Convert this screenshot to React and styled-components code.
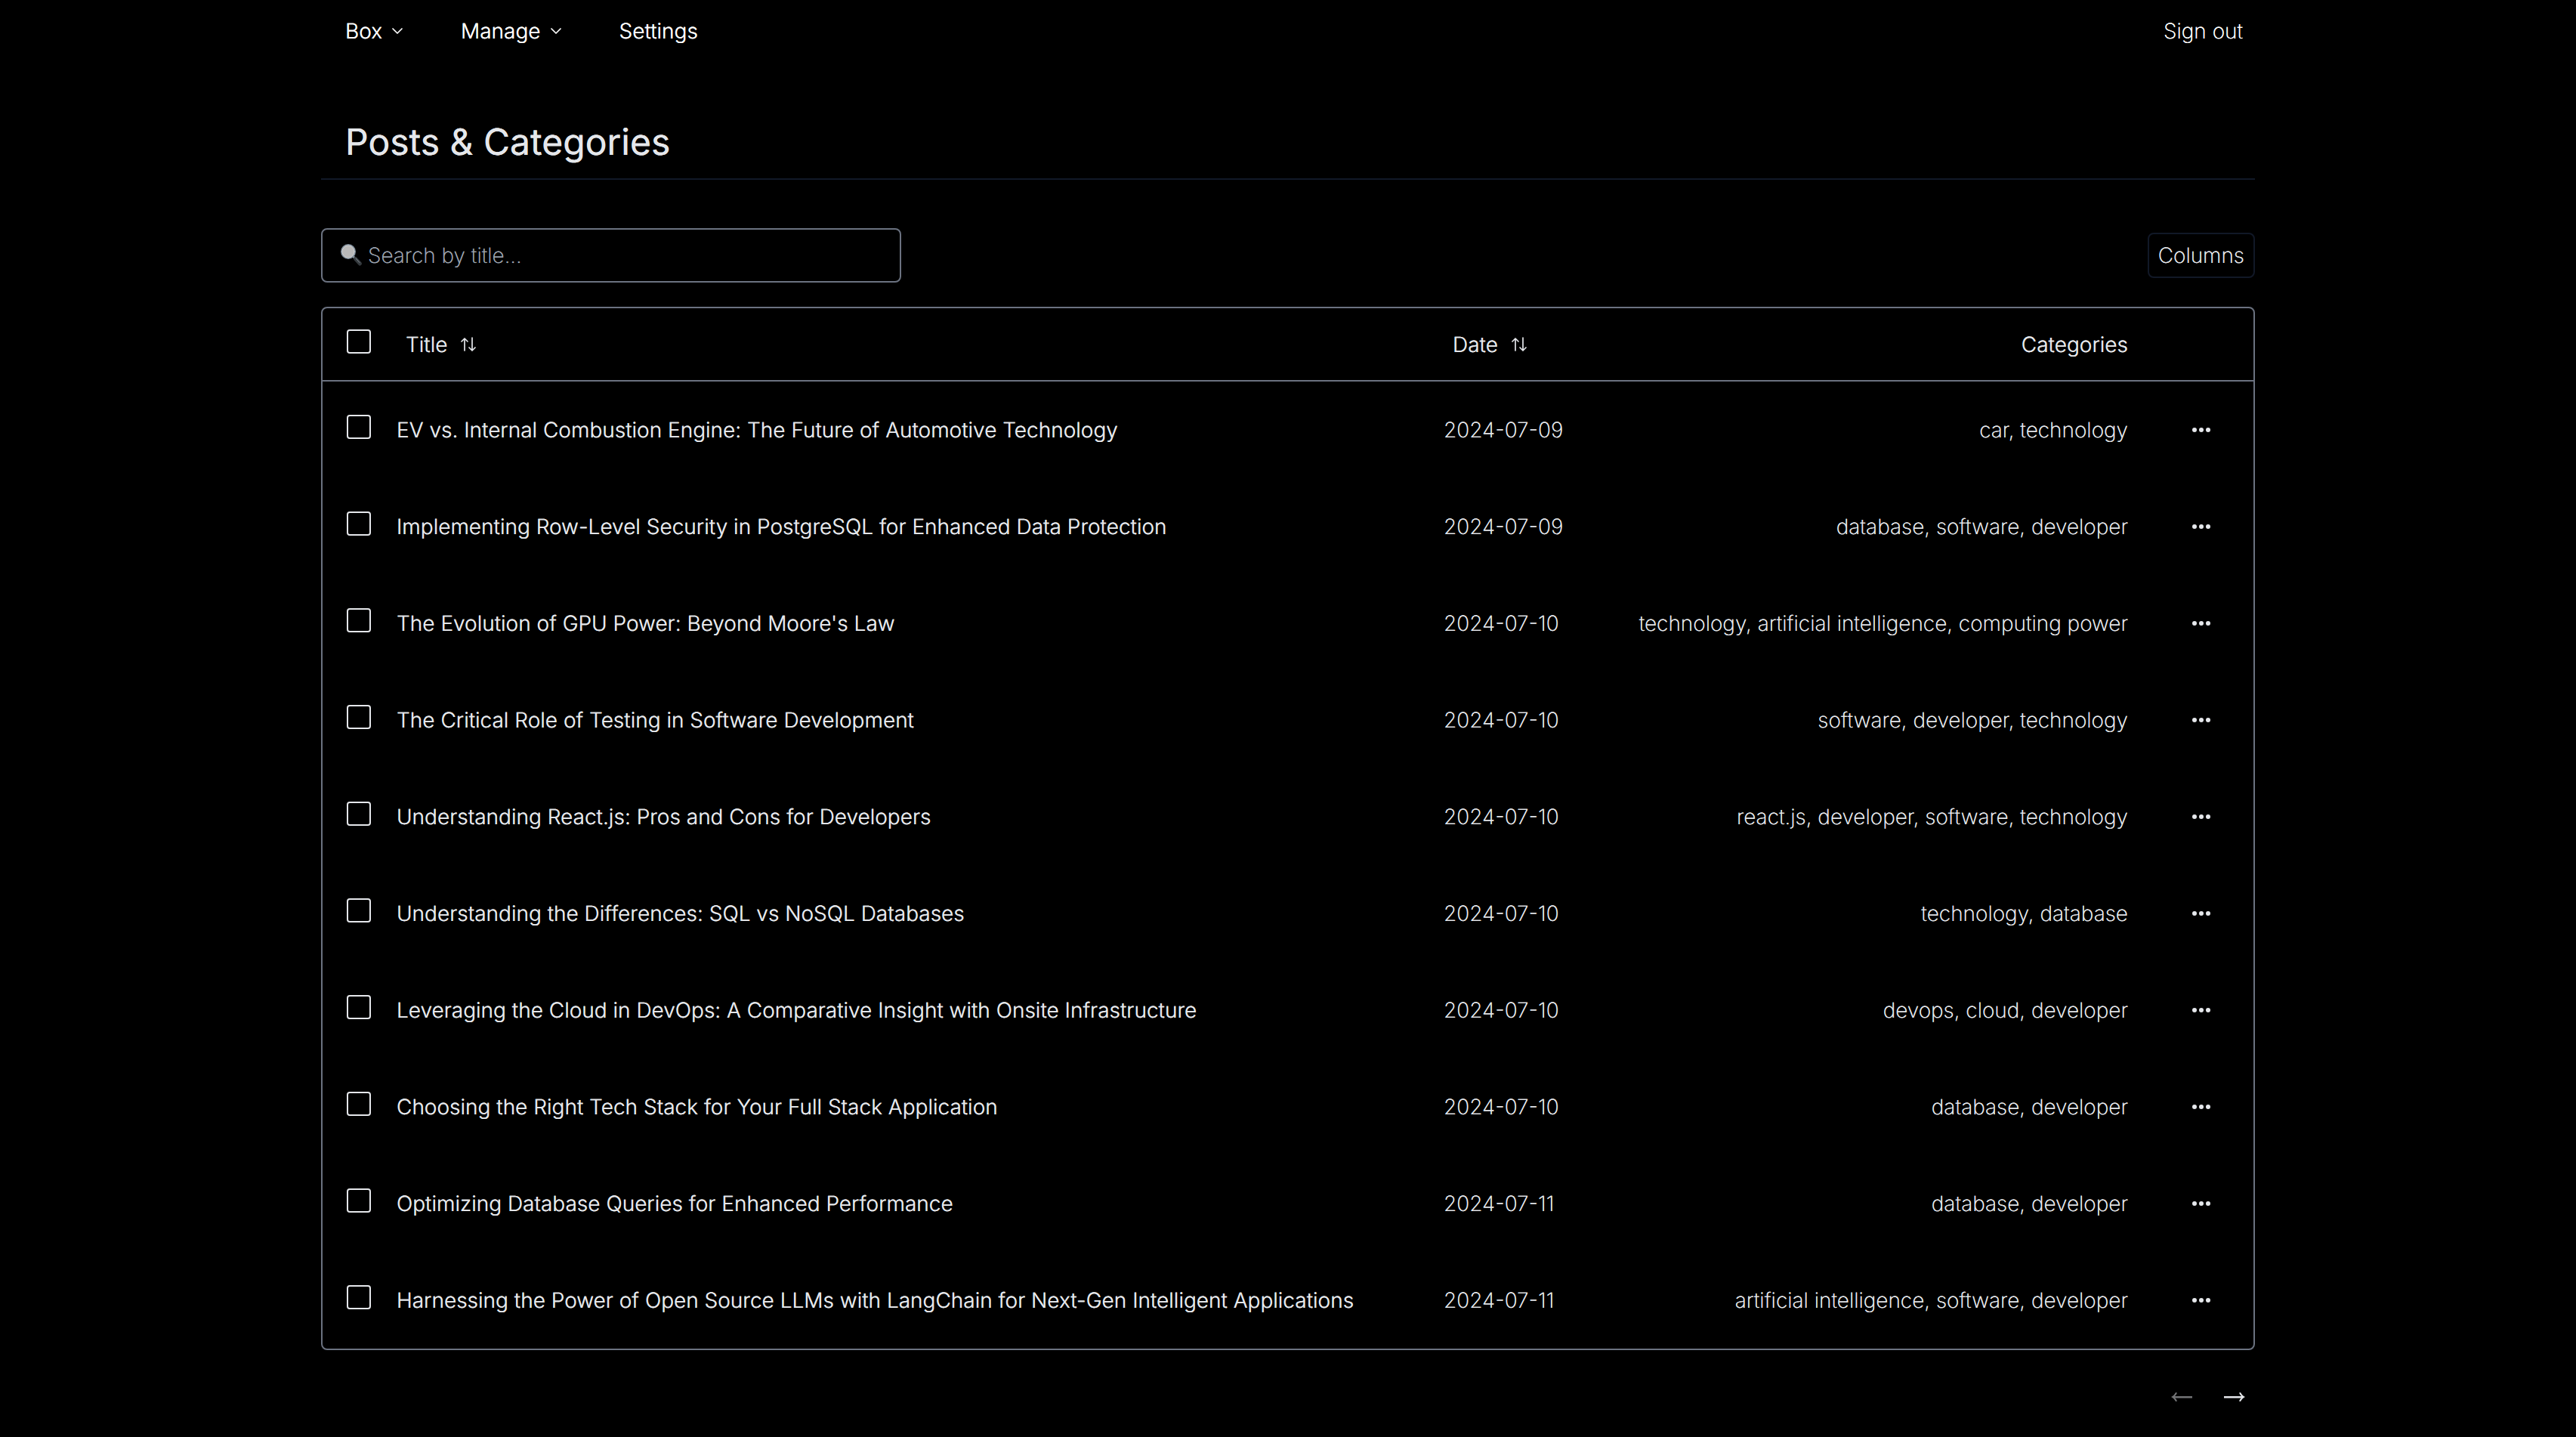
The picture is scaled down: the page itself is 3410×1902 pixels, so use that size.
import React from "react";
import styled, { createGlobalStyle } from "styled-components";
import { ChevronDown } from "lucide-react";

const ink = "#e5e7eb";
const line = "#6b7280";
const faint = "#111827";

const GlobalStyle = createGlobalStyle`
  *, *::before, *::after { box-sizing: border-box; }
  body {
    margin: 0;
    background: #000;
    color: ${ink};
    font-family: Inter, sans-serif;
    font-size: 28px;
    font-weight: 200;
    line-height: 40px;
    text-rendering: geometricPrecision;
    /* strengthens the edges of thin strokes on the black background */
    text-shadow: 0 0 0 currentColor;
  }
  button, input { font: inherit; color: inherit; text-rendering: inherit; text-shadow: inherit; }
  button { border: 0; padding: 0; background: none; cursor: pointer; }
`;

const Page = styled.div`
  max-width: 2560px;
  margin: 0 auto;
`;

const Nav = styled.nav`
  display: flex;
  justify-content: space-between;
  align-items: center;
  height: 82px;
  padding: 0 16px 0 0;
  color: #fff;
`;

const NavGroup = styled.div`
  display: flex;
  align-items: center;
  gap: 8px;
`;

const NavButton = styled.button`
  display: flex;
  align-items: center;
  gap: 8px;
  padding: 0 32px;
  font-weight: 300;
`;

const NavLink = styled.a`
  padding: ${(p) => (p.$flush ? "0" : "0 32px")};
  color: inherit;
  font-weight: ${(p) => (p.$flush ? 200 : 300)};
  text-decoration: none;
`;

const Header = styled.header`
  padding: 74px 32px 16px;
  border-bottom: 2px solid ${faint};
`;

const Heading = styled.h1`
  margin: 0;
  font-size: 48px;
  font-weight: 400;
  line-height: 64px;
`;

const Toolbar = styled.div`
  display: flex;
  align-items: center;
  justify-content: space-between;
  padding: 64px 0 32px;
`;

const SearchBox = styled.label`
  display: flex;
  align-items: center;
  gap: 6px;
  width: 30%;
  height: 72px;
  padding: 0 22px;
  border: 2px solid ${line};
  border-radius: 8px;
`;

const SearchInput = styled.input`
  flex: 1;
  min-width: 0;
  padding: 0;
  border: 0;
  outline: 0;
  background: transparent;
  &::placeholder { color: #9ca3af; opacity: 1; }
`;

const ColumnsButton = styled.button`
  padding: 8px 12px;
  border: 2px solid ${faint};
  border-radius: 8px;
`;

const TableFrame = styled.div`
  border: 2px solid ${line};
  border-radius: 8px;
`;

const Table = styled.table`
  width: 100%;
  border-collapse: separate;
  border-spacing: 0;
  table-layout: fixed;
`;

const Col = styled.col`
  width: ${(p) => p.$w};
`;

const HeadCell = styled.th`
  height: 97px;
  padding: 0 ${(p) => (p.$check ? "32px" : "16px")};
  padding-right: ${(p) => (p.$end ? "16px" : "0")};
  border-bottom: 2px solid ${line};
  font-weight: 300;
  text-align: ${(p) => (p.$end ? "right" : "left")};
`;

const Cell = styled.td`
  height: 128px;
  padding: 0 ${(p) => (p.$check ? "32px" : "16px")};
  padding-right: ${(p) => (p.$end ? "16px" : "0")};
  font-weight: ${(p) => (p.$strong ? 300 : 200)};
  text-align: ${(p) => (p.$end ? "right" : "left")};
  white-space: nowrap;
`;

const Checkbox = styled.input`
  appearance: none;
  display: block;
  width: 32px;
  height: 32px;
  margin: 0 0 8px;
  border: 2px solid ${ink};
  border-radius: 4px;
  &:checked { background: ${ink}; }
`;

const SortButton = styled.button`
  display: flex;
  align-items: center;
  gap: 18px;
  padding: 0 12px;
`;

const MoreButton = styled.button`
  display: flex;
  align-items: center;
  justify-content: center;
  width: 66px;
  height: 64px;
  margin-left: 32px;
`;

const Pager = styled.div`
  display: flex;
  justify-content: flex-end;
  gap: 16px;
  padding: 32px 0 24px;
`;

const PagerButton = styled.button`
  display: flex;
  align-items: center;
  justify-content: center;
  width: 54px;
  height: 60px;
  &:disabled { opacity: 0.5; }
`;

const Glass = () => (
  <svg width="32" height="32" viewBox="0 0 32 32" fill="none" strokeLinecap="round" aria-hidden="true">
    <path d="M19 18l2 2" stroke="#8d969c" strokeWidth="3" />
    <path d="M21.5 20.5l6 6.5" stroke="#33383c" strokeWidth="5" />
    <path d="M22 20l5 5.5" stroke="#7f8990" strokeWidth="1" />
    <circle cx="12" cy="11" r="9" fill="#b9b9b9" stroke="#8593a0" strokeWidth="2" />
    <circle cx="12" cy="11" r="8" stroke="#d0d0d0" strokeWidth="1" />
  </svg>
);

const SortIcon = () => (
  <svg width="20" height="20" viewBox="0 0 20 20" fill="none" stroke="currentColor" strokeWidth="1.7" strokeLinecap="round" strokeLinejoin="round" aria-hidden="true">
    <path d="M5 18V2M1 6l4-4 4 4M15 1v17M11 14l4 4 4-4" />
  </svg>
);

const Dots = () => (
  <svg width="26" height="8" viewBox="0 0 26 8" fill="currentColor" aria-hidden="true">
    <circle cx="4" cy="4" r="3" />
    <circle cx="13" cy="4" r="3" />
    <circle cx="22" cy="4" r="3" />
  </svg>
);

const Arrow = ({ left }) => (
  <svg width="28" height="14" viewBox="0 0 28 14" fill="currentColor" aria-hidden="true">
    <path
      transform={left ? "matrix(-1 0 0 1 28 0)" : undefined}
      d="M0 6H23C21.500 4.500 20.500 3 20 1.500L22 1C23.500 4 25.500 6 28 7C25.500 8 23.500 10 22 13L20 12.500C20.500 11 21.500 9.500 23 8.500H0Z"
    />
  </svg>
);

const posts = [
  ["EV vs. Internal Combustion Engine: The Future of Automotive Technology", "2024-07-09", "car, technology"],
  ["Implementing Row-Level Security in PostgreSQL for Enhanced Data Protection", "2024-07-09", "database, software, developer"],
  ["The Evolution of GPU Power: Beyond Moore's Law", "2024-07-10", "technology, artificial intelligence, computing power"],
  ["The Critical Role of Testing in Software Development", "2024-07-10", "software, developer, technology"],
  ["Understanding React.js: Pros and Cons for Developers", "2024-07-10", "react.js, developer, software, technology"],
  ["Understanding the Differences: SQL vs NoSQL Databases", "2024-07-10", "technology, database"],
  ["Leveraging the Cloud in DevOps: A Comparative Insight with Onsite Infrastructure", "2024-07-10", "devops, cloud, developer"],
  ["Choosing the Right Tech Stack for Your Full Stack Application", "2024-07-10", "database, developer"],
  ["Optimizing Database Queries for Enhanced Performance", "2024-07-11", "database, developer"],
  ["Harnessing the Power of Open Source LLMs with LangChain for Next-Gen Intelligent Applications", "2024-07-11", "artificial intelligence, software, developer"],
];

export default function App() {
  return (
    <Page>
      <GlobalStyle />
      <Nav>
        <NavGroup>
          <NavButton>Box<ChevronDown size={24} strokeWidth={1.7} /></NavButton>
          <NavButton>Manage<ChevronDown size={24} strokeWidth={1.7} /></NavButton>
          <NavLink href="#settings">Settings</NavLink>
        </NavGroup>
        <NavLink href="#signout" $flush>Sign out</NavLink>
      </Nav>
      <Header>
        <Heading>Posts &amp; Categories</Heading>
      </Header>
      <main>
        <Toolbar>
          <SearchBox>
            <Glass />
            <SearchInput type="text" placeholder="Search by title..." aria-label="Search by title" />
          </SearchBox>
          <ColumnsButton>Columns</ColumnsButton>
        </Toolbar>
        <TableFrame>
          <Table>
            <colgroup>
              <Col $w="82px" />
              <Col />
              <Col $w="200px" />
              <Col $w="738px" />
              <Col $w="150px" />
            </colgroup>
            <thead>
              <tr>
                <HeadCell $check><Checkbox type="checkbox" aria-label="Select all" /></HeadCell>
                <HeadCell><SortButton>Title<SortIcon /></SortButton></HeadCell>
                <HeadCell><SortButton>Date<SortIcon /></SortButton></HeadCell>
                <HeadCell $end>Categories</HeadCell>
                <HeadCell />
              </tr>
            </thead>
            <tbody>
              {posts.map(([title, date, categories]) => (
                <tr key={title}>
                  <Cell $check><Checkbox type="checkbox" aria-label={`Select ${title}`} /></Cell>
                  <Cell $strong>{title}</Cell>
                  <Cell>{date}</Cell>
                  <Cell $end>{categories}</Cell>
                  <Cell><MoreButton aria-label="Open menu"><Dots /></MoreButton></Cell>
                </tr>
              ))}
            </tbody>
          </Table>
        </TableFrame>
        <Pager>
          <PagerButton disabled aria-label="Previous page"><Arrow left /></PagerButton>
          <PagerButton aria-label="Next page"><Arrow /></PagerButton>
        </Pager>
      </main>
    </Page>
  );
}
